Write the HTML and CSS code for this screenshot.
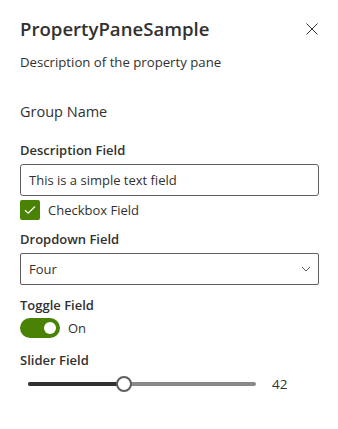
FILE: index.html
```html
<!DOCTYPE html>
<html lang="en">
<head>
    <meta charset="UTF-8">
    <meta name="viewport" content="width=device-width, initial-scale=1.0">
    <title>PropertyPaneSample</title>
    <link rel="stylesheet" href="styles.css">
</head>
<body>
    <div class="pane">
        <div class="pane-header">
            <h1>PropertyPaneSample</h1>
            <button class="close-btn" aria-label="Close">
                <svg width="12" height="12" viewBox="0 0 12 12">
                    <path d="M0.5 0.5 L11.5 11.5 M11.5 0.5 L0.5 11.5" stroke="#323130" stroke-width="1" fill="none"/>
                </svg>
            </button>
        </div>
        <p class="pane-desc">Description of the property pane</p>

        <div class="group-name">Group Name</div>

        <label class="field-label" for="desc">Description Field</label>
        <input class="text-field" id="desc" type="text" value="This is a simple text field">

        <div class="checkbox-row">
            <span class="checkbox">
                <svg width="12" height="10" viewBox="0 0 12 10">
                    <path d="M1 5.2 L4.2 8.2 L11 1.5" stroke="white" stroke-width="1.3" fill="none"/>
                </svg>
            </span>
            <span>Checkbox Field</span>
        </div>

        <div class="field-label dd-label">Dropdown Field</div>
        <div class="dropdown">
            <span>Four</span>
            <svg width="10" height="6" viewBox="0 0 10 6">
                <path d="M1 1 L5 5 L9 1" stroke="#605e5c" stroke-width="1" fill="none"/>
            </svg>
        </div>

        <div class="field-label toggle-label">Toggle Field</div>
        <div class="toggle-row">
            <span class="toggle"><span class="toggle-thumb"></span></span>
            <span>On</span>
        </div>

        <div class="field-label slider-label">Slider Field</div>
        <div class="slider-row">
            <div class="slider-track">
                <div class="slider-fill" style="width: 42%;"></div>
                <div class="slider-thumb" style="left: 42%;"></div>
            </div>
            <span class="slider-value">42</span>
        </div>
    </div>
</body>
</html>
```

FILE: styles.css
```css
body {
    margin: 0;
    font-family: 'Open Sans', 'Noto Sans', sans-serif;
    color: #323130;
    background: white;
}
.pane {
    padding: 15px 19px 15px 20px;
    display: flex;
    flex-direction: column;
}
.pane-header {
    display: flex;
    justify-content: space-between;
    align-items: center;
}
h1 {
    margin: 0;
    font-size: 18.6px;
    line-height: 28px;
    font-weight: 600;
}
.close-btn {
    border: none;
    background: none;
    padding: 0;
    width: 14px;
    height: 14px;
    display: flex;
    align-items: center;
    justify-content: center;
    margin-right: 0;
}
.pane-desc {
    margin: 9px 0 0;
    font-size: 13.2px;
    line-height: 20px;
}
.group-name {
    margin-top: 29px;
    font-size: 14.5px;
    line-height: 22px;
}
.field-label {
    display: block;
    margin-top: 17px;
    font-size: 13px;
    line-height: 20px;
    font-weight: 600;
}
.text-field {
    margin-top: 4px;
    height: 32px;
    box-sizing: border-box;
    border: 1px solid #605e5c;
    border-radius: 3px;
    padding: 0 8px;
    font-family: inherit;
    font-size: 13px;
    color: #323130;
}
.checkbox-row {
    margin-top: 4px;
    display: flex;
    align-items: center;
    gap: 8px;
    font-size: 13px;
    line-height: 20px;
}
.checkbox {
    width: 20px;
    height: 20px;
    border-radius: 2px;
    background: #498205;
    display: flex;
    align-items: center;
    justify-content: center;
}
.dd-label {
    margin-top: 9px;
}
.dropdown {
    margin-top: 4px;
    height: 32px;
    box-sizing: border-box;
    border: 1px solid #605e5c;
    border-radius: 2px;
    padding: 0 7px 0 8px;
    display: flex;
    align-items: center;
    justify-content: space-between;
    font-size: 13px;
}
.toggle-label {
    margin-top: 10px;
}
.toggle-row {
    margin-top: 3px;
    display: flex;
    align-items: center;
    gap: 8px;
    font-size: 13px;
    line-height: 20px;
}
.toggle {
    width: 40px;
    height: 20px;
    border-radius: 10px;
    background: #498205;
    display: flex;
    align-items: center;
    justify-content: flex-end;
    padding-right: 4px;
    box-sizing: border-box;
}
.toggle-thumb {
    width: 12px;
    height: 12px;
    border-radius: 50%;
    background: white;
}
.slider-label {
    margin-top: 12px;
}
.slider-row {
    height: 28px;
    display: flex;
    align-items: center;
    padding-left: 8px;
    gap: 16px;
}
.slider-track {
    position: relative;
    width: 228px;
    height: 4px;
    border-radius: 2px;
    background: #8a8886;
}
.slider-fill {
    height: 4px;
    border-radius: 2px;
    background: #323130;
}
.slider-thumb {
    position: absolute;
    top: 50%;
    width: 12px;
    height: 12px;
    border: 2px solid #605e5c;
    border-radius: 50%;
    background: white;
    transform: translate(-50%, -50%);
}
.slider-value {
    font-size: 13.5px;
}
```
